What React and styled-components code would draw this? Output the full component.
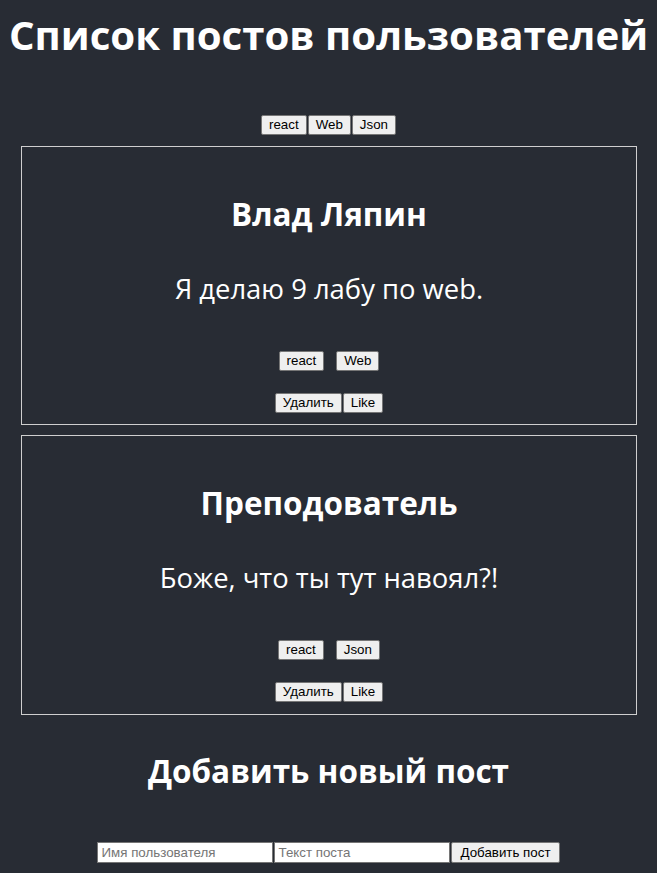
import styled, { createGlobalStyle } from "styled-components";

const GlobalStyle = createGlobalStyle`
  html, body {
    margin: 0;
    background-color: #282c34;
  }
`;

const Page = styled.div`
  min-height: 100vh;
  background-color: #282c34;
  color: #ffffff;
  text-align: center;
  font-family: "Open Sans", "Noto Sans", sans-serif;
  padding-bottom: 20px;
`;

const Title = styled.h1`
  font-size: 40.2px;
  font-weight: 700;
  margin: 7px 0 0;
  white-space: nowrap;
`;

const Row = styled.div`
  display: flex;
  justify-content: center;
  gap: ${({ $gap }) => $gap || 1}px;
  margin-top: ${({ $top }) => $top || 0}px;
`;

const Btn = styled.button`
  font-family: "Liberation Sans", Arial, sans-serif;
  font-size: 13.33px;
  line-height: 16px;
  height: ${({ $h }) => $h || 20}px;
  box-sizing: border-box;
  color: #000;
  background: #efefef;
  border: 1px solid #767676;
  border-radius: 2px;
  padding: 1px ${({ $pad }) => $pad || 7}px;
  margin: 0;
  cursor: pointer;
`;

const Posts = styled.div`
  margin: 0 20px 0 21px;
`;

const Post = styled.div`
  border: 1px solid #cfcfcf;
  padding: 0 0 11.5px;
  margin-top: ${({ $top }) => $top}px;
`;

const PostTitle = styled.h2`
  font-size: 31.5px;
  font-weight: 700;
  margin: 45px 0 0;
`;

const PostBody = styled.p`
  font-size: 27.4px;
  font-weight: 400;
  margin: 35px 0 0;
`;

const SubTitle = styled.h2`
  font-size: 31.5px;
  font-weight: 700;
  margin: 34px 0 0;
`;

const Field = styled.input`
  font-family: "Liberation Sans", Arial, sans-serif;
  font-size: 13.33px;
  width: 176px;
  height: 21px;
  box-sizing: border-box;
  padding: 1px 3px;
  border: 1px solid #767676;
  background: #fff;
  color: #000;
  margin: 0;
  &::placeholder {
    color: #757575;
  }
`;

const posts = [
  { id: 1, author: "Влад Ляпин", text: "Я делаю 9 лабу по web.", tags: ["react", "Web"] },
  { id: 2, author: "Преподователь", text: "Боже, что ты тут навоял?!", tags: ["react", "Json"] },
];

export default function App() {
  return (
    <>
      <GlobalStyle />
      <Page>
        <Title>Список постов пользователей</Title>
        <Row $top={52.5}>
          <Btn>react</Btn>
          <Btn>Web</Btn>
          <Btn>Json</Btn>
        </Row>
        <Posts>
          {posts.map((p, i) => (
            <Post key={p.id} $top={i === 0 ? 11 : 10}>
              <PostTitle>{p.author}</PostTitle>
              <PostBody>{p.text}</PostBody>
              <Row $top={44} $gap={12}>
                {p.tags.map((t) => (
                  <Btn key={t}>{t}</Btn>
                ))}
              </Row>
              <Row $top={22}>
                <Btn>Удалить</Btn>
                <Btn>Like</Btn>
              </Row>
            </Post>
          ))}
        </Posts>
        <SubTitle>Добавить новый пост</SubTitle>
        <Row $top={50.5}>
          <Field placeholder="Имя пользователя" />
          <Field placeholder="Текст поста" />
          <Btn $pad={8} $h={21}>Добавить пост</Btn>
        </Row>
      </Page>
    </>
  );
}
